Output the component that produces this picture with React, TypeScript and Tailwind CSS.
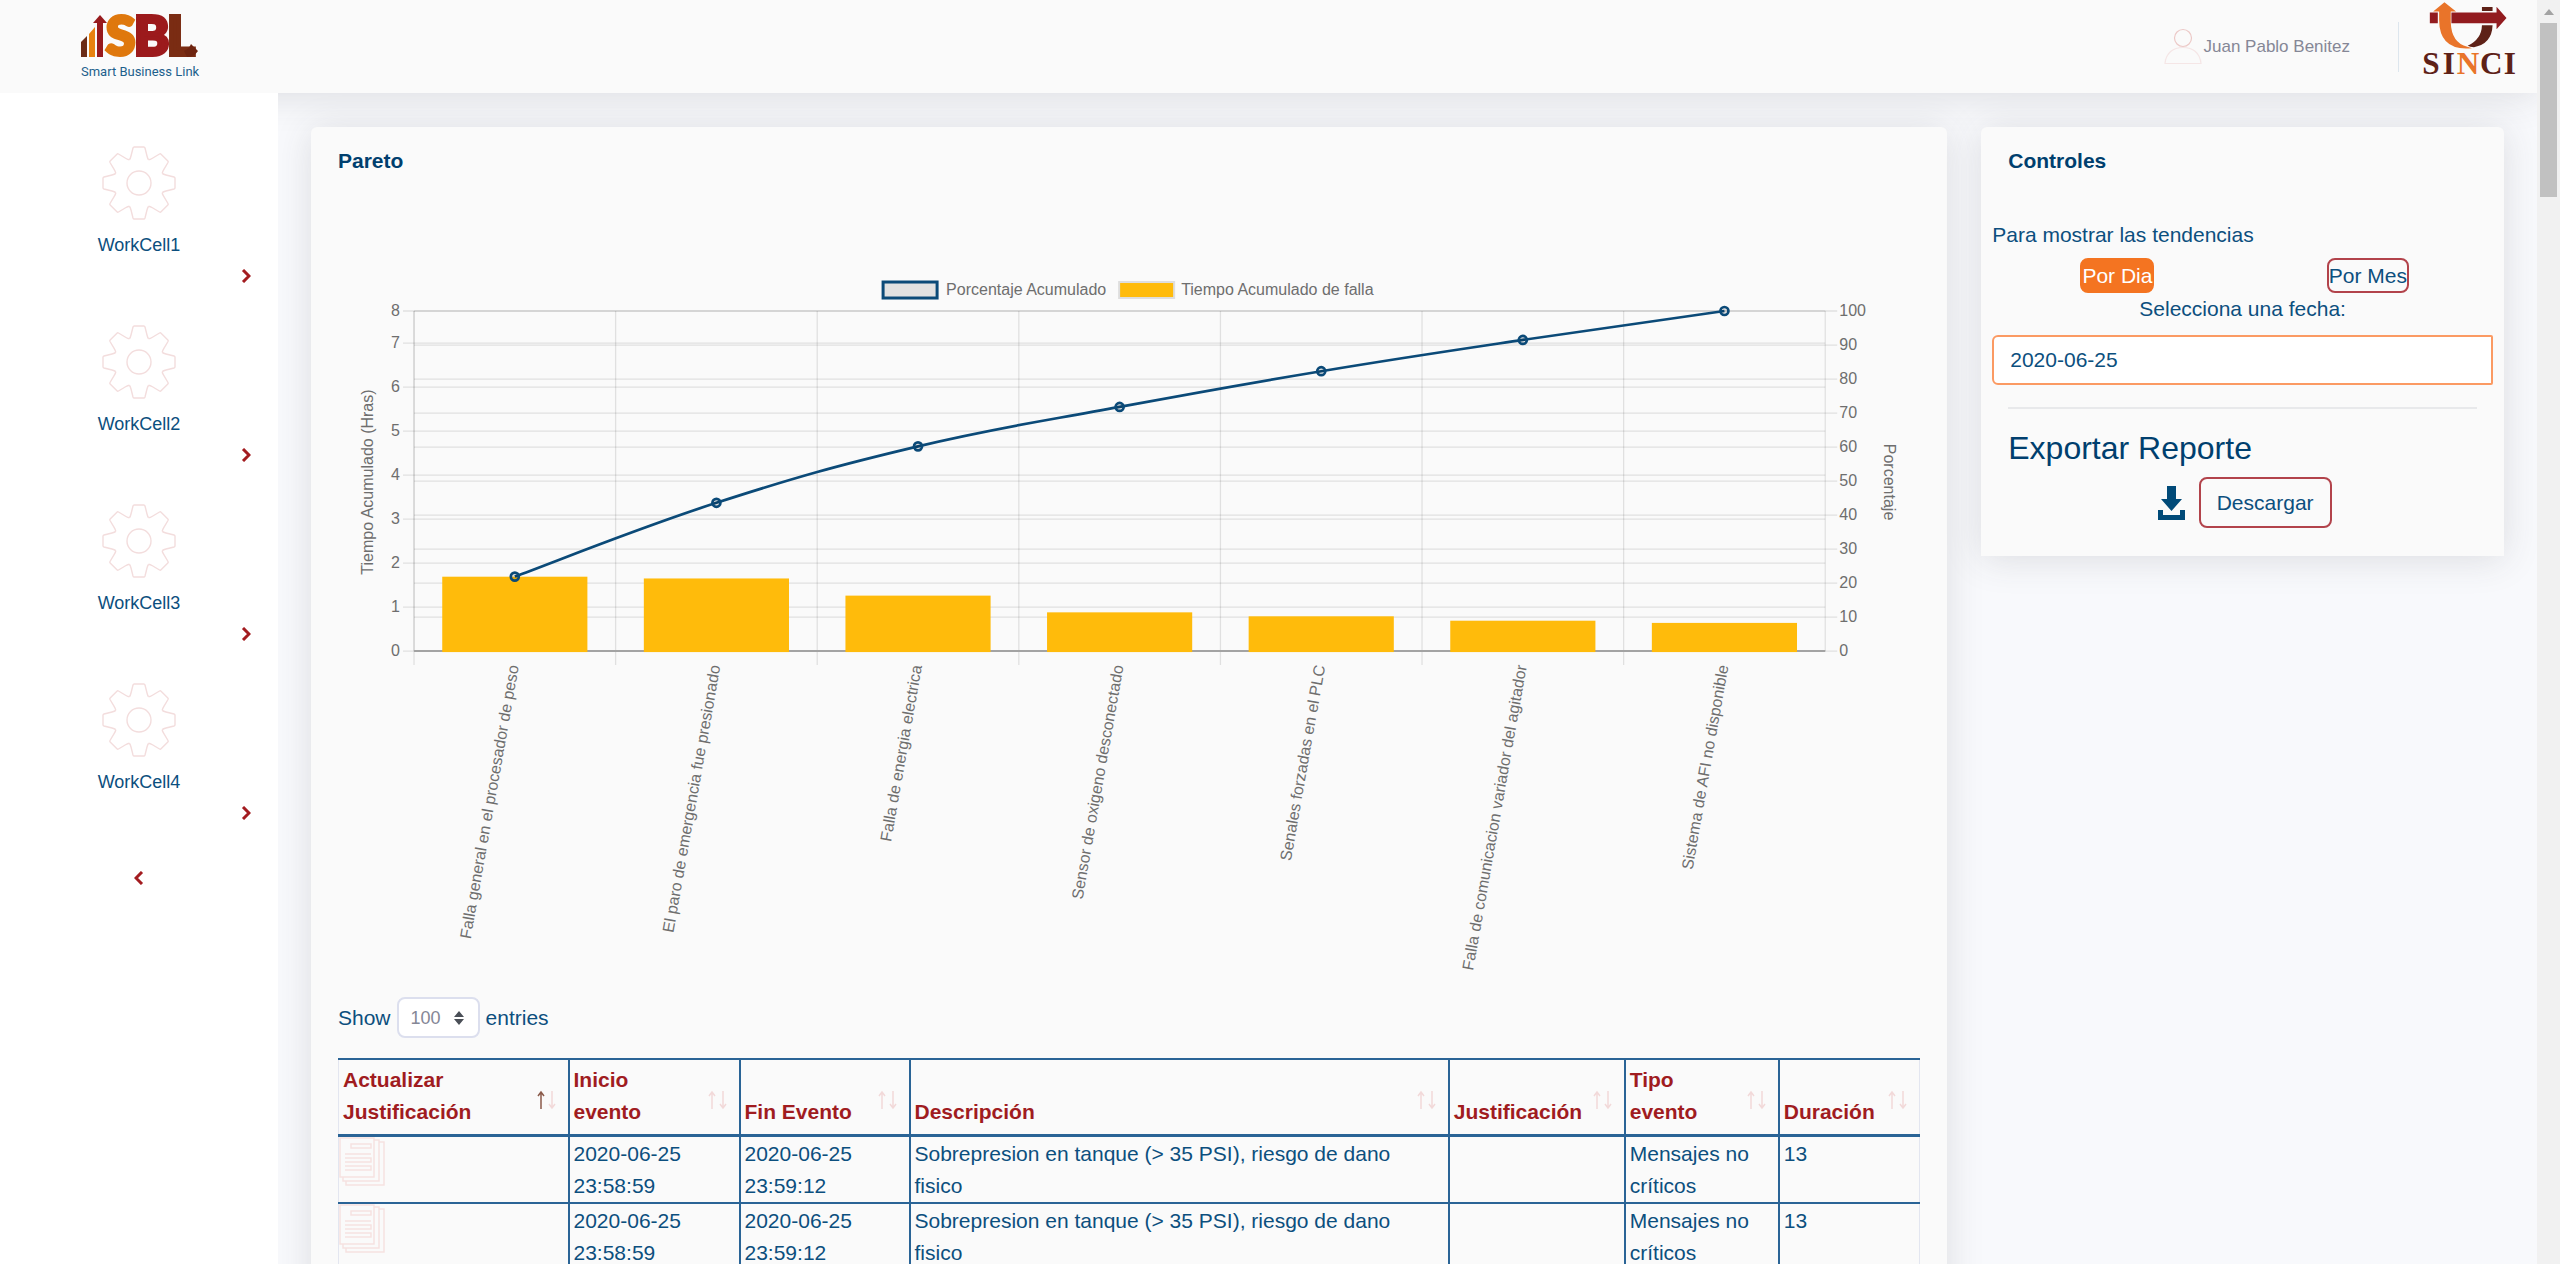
import React, { useState } from "react";

const workCells = ["WorkCell1", "WorkCell2", "WorkCell3", "WorkCell4"];

const paretoData = [
  { label: "Falla general en el procesador de peso", hours: 1.69, percent: 21.9 },
  { label: "El paro de emergencia fue presionado", hours: 1.65, percent: 43.6 },
  { label: "Falla de energia electrica", hours: 1.26, percent: 60.2 },
  { label: "Sensor de oxigeno desconectado", hours: 0.88, percent: 71.8 },
  { label: "Senales forzadas en el PLC", hours: 0.79, percent: 82.3 },
  { label: "Falla de comunicacion variador del agitador", hours: 0.69, percent: 91.5 },
  { label: "Sistema de AFI no disponible", hours: 0.64, percent: 100 },
];

const columns = [
  { name: "Actualizar Justificación", width: "w-[230px]", sorted: true },
  { name: "Inicio evento", width: "w-[171px]", sorted: false },
  { name: "Fin Evento", width: "w-[170px]", sorted: false },
  { name: "Descripción", width: "", sorted: false },
  { name: "Justificación", width: "w-[176px]", sorted: false },
  { name: "Tipo evento", width: "w-[154px]", sorted: false },
  { name: "Duración", width: "w-[141px]", sorted: false },
];

const event = {
  start: "2020-06-25 23:58:59",
  end: "2020-06-25 23:59:12",
  description: "Sobrepresion en tanque (> 35 PSI), riesgo de dano fisico",
  reason: "",
  type: "Mensajes no críticos",
  duration: 13,
};

const events = [1, 2].map((id) => ({ id, ...event }));

const SblLogo = () => (
  <svg viewBox="0 0 120 66" className="h-[66px] w-[120px] overflow-visible" role="img" aria-label="SBL Smart Business Link">
    <path d="M0 28l6-6v21H0z" fill="#6b2c17" />
    <path d="M8 20l6-7v30H8z" fill="#e8820f" />
    <path d="M16 43V9h-4l7-8 7 8h-4v34z" fill="#971a1d" />
    <g fontFamily="Lato, sans-serif" fontWeight="900" fontSize="53" strokeWidth="4">
      <text x="25" y="41" fill="#df780d" stroke="#df780d">S</text>
      <text x="53" y="41" fill="#9c1a1c" stroke="#9c1a1c">B</text>
      <text x="86" y="41" fill="#7a2c13" stroke="#7a2c13">L</text>
    </g>
    <path d="M103 37q5-2 7-7l7 7q-4 6-11 6z" fill="#6e2410" />
    <text x="0" y="62" fontFamily="Roboto, sans-serif" fontSize="13" fill="#1d5f8c">
      Smart Business Link
    </text>
  </svg>
);

const SinciLogo = () => (
  <svg viewBox="1025 0 285 232" className="h-[77px] w-[95px] overflow-visible" role="img" aria-label="SINCI">
    <path d="M1208 21h32v12h-32zM1208 76h32q-2 56-56 66-12 0-19-4 42-20 43-62z" fill="#5e2117" />
    <path d="M1051 38h24v32h-24zM1116 38h136V20l30 34-30 34V70h-136z" fill="#921b1f" />
    <path d="M1061 35l34-28 35 28h-16v32q2 62 50 74 8 2 14 4-98 10-99-84V35z" fill="#e9742a" />
    <g fontFamily="'Liberation Serif', serif" fontWeight="700" fontSize="94" textAnchor="middle">
      <text x="1054" y="222" fill="#5e2117">S</text>
      <text x="1108" y="222" fill="#5e2117">I</text>
      <text x="1166" y="222" fill="#e9742a">N</text>
      <text x="1236" y="222" fill="#5e2117">C</text>
      <text x="1292" y="222" fill="#5e2117">I</text>
    </g>
  </svg>
);

const gearTeeth = [0, 45, 90, 135, 180, 225, 270, 315];

const GearIcon = () => (
  <svg viewBox="-38 -38 76 76" className="h-19 w-19" fill="none" stroke="#f3dddd" strokeWidth="1.4">
    {gearTeeth.map((angle) => (
      <path
        key={angle}
        transform={`rotate(${angle})`}
        d="M-9.6 -23.2Q-8.6 -24.4 -8 -27L-6 -35Q-5.7 -36 -4.8 -36H4.8Q5.7 -36 6 -35L8 -27Q8.6 -24.4 9.6 -23.2"
      />
    ))}
    <circle r="12" />
  </svg>
);

const UserIcon = () => (
  <svg viewBox="0 0 38 38" className="h-[38px] w-[38px]" fill="none" strokeWidth="1.2">
    <circle cx="19" cy="10" r="8.5" stroke="#ecc9c7" />
    <path d="M1 35.5C2 25 9 19.5 19 19.5S36 25 37 35.5z" stroke="#f5e6e6" />
  </svg>
);

const Chevron = ({ left = false }: { left?: boolean }) => (
  <svg viewBox="0 0 10 14" className="h-[14px] w-[10px]" fill="none" stroke="#a31c20" strokeWidth="3">
    <path d={left ? "M8 1L2 7l6 6" : "M2 1l6 6-6 6"} />
  </svg>
);

const DownloadIcon = () => (
  <svg viewBox="0 0 27 34" className="h-[34px] w-[27px]" fill="#004a78">
    <path d="M9 0h9v13h6L13.5 25 3 13h6zM0 24h5v5h17v-5h5v10H0z" />
  </svg>
);

const DocumentsIcon = () => (
  <svg viewBox="0 0 46 50" className="block h-[50px] w-[46px]" fill="none" stroke="#f6e2e1" strokeWidth="1.5">
    <path d="M1 1h34v39H1zM35 3h5v41H4v-4M40 5h5v43H7v-4" />
    <path d="M12 7h20v4H12zM6 17h26M6 21h26v4H6M6 29h26v4H6" />
  </svg>
);

const SortIcon = ({ sorted }: { sorted: boolean }) => (
  <svg viewBox="0 0 19 20" className="h-5 w-[19px] shrink-0" fill="none" strokeWidth="1.5">
    <path d="M4 19V2M1 6l3-4 3 4" stroke={sorted ? "#8a5a4a" : "#f2d9d9"} />
    <path d="M15 1v17M12 14l3 4 3-4" stroke="#f2d9d9" />
  </svg>
);

const LEFT = 76;
const RIGHT = 1487;
const TOP = 134;
const BOTTOM = 474;
const STEP = (RIGHT - LEFT) / paretoData.length;
const HOUR = 44;

const points = paretoData.map((d, i) => ({
  x: LEFT + STEP * (i + 0.5),
  y: BOTTOM - ((BOTTOM - TOP) * d.percent) / 100,
}));

// smooth line through the points
const linePath = points.reduce((path, p, i) => {
  if (i === 0) return `M${p.x} ${p.y}`;
  const prev = points[i - 1];
  const before = points[i - 2] || prev;
  const next = points[i + 1] || p;
  const c1 = { x: prev.x + (p.x - before.x) * 0.2, y: prev.y + (p.y - before.y) * 0.2 };
  const c2 = { x: p.x - (next.x - prev.x) * 0.2, y: p.y - (next.y - prev.y) * 0.2 };
  return `${path}C${c1.x} ${c1.y} ${c2.x} ${c2.y} ${p.x} ${p.y}`;
}, "");

const ParetoChart = () => {
  const hours = [0, 1, 2, 3, 4, 5, 6, 7, 8];
  const percents = [0, 10, 20, 30, 40, 50, 60, 70, 80, 90, 100];
  const hourY = (h: number) => (h === 8 ? TOP : BOTTOM - h * HOUR);
  const percentY = (p: number) => BOTTOM - ((BOTTOM - TOP) * p) / 100;

  return (
    <svg
      viewBox="0 0 1582 800"
      className="block h-auto w-full"
      fontFamily="'Liberation Sans', sans-serif"
      fontSize="16"
      fill="#6e6e6e"
      role="img"
      aria-label="Pareto"
    >
      {/* Legend */}
      <rect x="545" y="105" width="54" height="16" fill="#e1e1e1" stroke="#0b4a78" strokeWidth="3" />
      <text x="608" y="118">Porcentaje Acumulado</text>
      <rect x="781" y="105" width="55" height="16" fill="#ffbb0b" stroke="#dedede" strokeWidth="2" />
      <text x="843" y="118">Tiempo Acumulado de falla</text>

      {/* Grid */}
      <g stroke="#000000" strokeOpacity="0.1" strokeWidth="1.3">
        {hours.map((h) => (
          <line key={h} x1={LEFT - 11} x2={RIGHT} y1={hourY(h)} y2={hourY(h)} />
        ))}
        {percents.map((p) => (
          <line key={p} x1={LEFT} x2={RIGHT + 12} y1={percentY(p)} y2={percentY(p)} />
        ))}
        {[0, 1, 2, 3, 4, 5, 6, 7].map((i) => (
          <line key={i} x1={LEFT + STEP * i} x2={LEFT + STEP * i} y1={TOP} y2={i === 7 ? BOTTOM : BOTTOM + 14} />
        ))}
        <line x1={LEFT} x2={LEFT} y1={TOP} y2={BOTTOM} />
      </g>
      <line x1={LEFT} x2={RIGHT} y1={BOTTOM} y2={BOTTOM} stroke="#a3a3a3" strokeWidth="2" />

      {/* Axis values */}
      {hours.map((h) => (
        <text key={h} x="62" y={hourY(h) + 5} textAnchor="end">{h}</text>
      ))}
      {percents.map((p) => (
        <text key={p} x="1501" y={percentY(p) + 5}>{p}</text>
      ))}
      <text transform="translate(35 305) rotate(-90)" textAnchor="middle">Tiempo Acumulado (Hras)</text>
      <text transform="translate(1546 305) rotate(90)" textAnchor="middle">Porcentaje</text>

      {/* Bars and category labels */}
      {paretoData.map((d, i) => (
        <g key={d.label}>
          <rect
            x={points[i].x - STEP * 0.36}
            y={BOTTOM - d.hours * HOUR}
            width={STEP * 0.72}
            height={d.hours * HOUR + 1}
            fill="#ffbb0b"
          />
          <text transform={`translate(${points[i].x + 4} ${BOTTOM + 15}) rotate(-80)`} textAnchor="end">
            {d.label}
          </text>
        </g>
      ))}

      {/* Accumulated line */}
      <g fill="none" stroke="#0b4a78" strokeWidth="2.7">
        <path d={linePath} />
        {points.map((p) => (
          <circle key={p.x} cx={p.x} cy={p.y} r="4" fill="#000000" fillOpacity="0.1" />
        ))}
      </g>
    </svg>
  );
};

const EventsTable = () => (
  <table className="w-full table-fixed border-collapse border-x border-[#e3e6f0] text-left text-[21px] leading-8">
    <thead>
      <tr className="border-t-2 border-b-3 border-[#2a6496] text-[#a01c1f]">
        {columns.map((col) => (
          <th
            key={col.name}
            scope="col"
            className={`${col.width} border-l-2 border-[#2a6496] pt-1 pr-3 pb-1.5 pl-1 align-bottom font-bold first:border-l-0`}
          >
            <div className="flex items-end justify-between gap-2">
              <span>{col.name}</span>
              <span className="self-end pb-[18px]">
                <SortIcon sorted={col.sorted} />
              </span>
            </div>
          </th>
        ))}
      </tr>
    </thead>
    <tbody className="align-top">
      {events.map((row) => (
        <tr key={row.id} className="border-b-2 border-[#2a6496]">
          <td className="p-0">
            <button type="button" aria-label="Actualizar Justificación" className="block cursor-pointer">
              <DocumentsIcon />
            </button>
          </td>
          <td className="border-l-2 border-[#2a6496] pt-px pl-1">{row.start}</td>
          <td className="border-l-2 border-[#2a6496] pt-px pl-1">{row.end}</td>
          <td className="border-l-2 border-[#2a6496] pt-px pr-8 pl-1">{row.description}</td>
          <td className="border-l-2 border-[#2a6496] pt-px pl-1">{row.reason}</td>
          <td className="border-l-2 border-[#2a6496] pt-px pl-1">{row.type}</td>
          <td className="border-l-2 border-[#2a6496] pt-px pl-1">{row.duration}</td>
        </tr>
      ))}
    </tbody>
  </table>
);

const Controls = () => {
  const [mode, setMode] = useState("dia");
  const [date, setDate] = useState("2020-06-25");
  const active = "border-[#f47421] bg-[#f47421] text-white";
  const idle = "border-[#b2434b] text-[#0c4f7e]";

  return (
    <section className="rounded-t-md bg-[#fafafa] px-[11px] pt-[18px] pb-7 shadow-[0_3px_37px_rgba(58,59,69,0.15)]">
      <h2 className="px-4 font-bold text-[#003f6e]">Controles</h2>
      <p className="mt-[42px]">Para mostrar las tendencias</p>
      <div className="mt-[7px] grid grid-cols-2 justify-items-center">
        <button
          type="button"
          onClick={() => setMode("dia")}
          className={`h-[35px] rounded-lg border-2 leading-[30px] ${mode === "dia" ? active : idle}`}
        >
          Por Dia
        </button>
        <button
          type="button"
          onClick={() => setMode("mes")}
          className={`h-[35px] rounded-lg border-2 leading-[30px] ${mode === "mes" ? active : idle}`}
        >
          Por Mes
        </button>
      </div>
      <label htmlFor="fecha" className="block text-center">
        Selecciona una fecha:
      </label>
      <input
        id="fecha"
        type="text"
        value={date}
        onChange={(e) => setDate(e.target.value)}
        className="mt-2.5 block h-[50px] w-full rounded-l-md rounded-r-xs border-2 border-[#fb9a63] bg-white px-4"
      />
      <hr className="mx-4 mt-[22px] border-t-2 border-[#e8e9eb]" />
      <h3 className="mt-5 px-4 text-[32px] leading-[38px] text-[#003f6e]">Exportar Reporte</h3>
      <div className="mt-2.5 flex items-center justify-center gap-3.5 pl-1">
        <DownloadIcon />
        <button type="button" className="h-[51px] rounded-lg border-2 border-[#b2434b] px-4">
          Descargar
        </button>
      </div>
    </section>
  );
};

const App = () => {
  const [entries, setEntries] = useState("100");

  return (
    <div className="flex h-screen overflow-hidden bg-[#f8f9fc] font-['Liberation_Sans',Arial,sans-serif] text-[21px] leading-8 text-[#0c4f7e]">
      <div className="flex min-w-0 flex-1 flex-col">
        <header className="flex h-[93px] shrink-0 items-center justify-between bg-[#fafafa] pr-[21px] pl-[81px] shadow-[0_3px_37px_rgba(58,59,69,0.15)]">
          <a href="#">
            <SblLogo />
          </a>
          <div className="flex items-center">
            <button type="button" className="flex items-center gap-0.5 text-[17px] text-[#858796]">
              <UserIcon />
              Juan Pablo Benitez
            </button>
            <div className="ml-12 h-[50px] w-px bg-[#dde6ee]" />
            <a href="#" className="mb-4 ml-[22px]">
              <SinciLogo />
            </a>
          </div>
        </header>

        <div className="flex min-h-0 flex-1">
          {/* Sidebar */}
          <nav className="relative flex w-[278px] shrink-0 flex-col items-center bg-white pt-[52px]">
            {workCells.map((cell) => (
              <a key={cell} href="#" className="flex h-[179px] w-full flex-col items-center text-[18px] leading-6">
                <GearIcon />
                <span className="mt-3">{cell}</span>
                <span className="mt-3 self-end pr-[27px]">
                  <Chevron />
                </span>
              </a>
            ))}
            <button type="button" aria-label="Contraer menú" className="mt-2.5 cursor-pointer">
              <Chevron left />
            </button>
          </nav>

          <main className="grid min-w-0 flex-1 grid-cols-[3fr_1fr] items-start px-4 pt-[17px]">
            <div className="min-w-0 p-[17px]">
              <section className="rounded-md bg-[#fafafa] px-[27px] pt-[18px] pb-10 shadow-[0_3px_37px_rgba(58,59,69,0.15)]">
                <h2 className="font-bold text-[#003f6e]">Pareto</h2>
                <ParetoChart />
                <label className="my-5 flex items-center gap-1.5">
                  Show
                  <span className="relative">
                    <select
                      value={entries}
                      onChange={(e) => setEntries(e.target.value)}
                      className="block h-[41px] w-[83px] appearance-none rounded-lg border-2 border-[#dcdfee] bg-white pl-3 text-[18px] text-[#858796]"
                    >
                      <option>10</option>
                      <option>25</option>
                      <option>50</option>
                      <option>100</option>
                    </select>
                    <svg
                      viewBox="0 0 10 14"
                      className="pointer-events-none absolute top-3.5 right-4 h-3.5 w-2.5"
                      fill="#4a4f57"
                    >
                      <path d="M0 6l5-6 5 6zM0 8h10l-5 6z" />
                    </svg>
                  </span>
                  entries
                </label>
                <EventsTable />
              </section>
            </div>
            <div className="min-w-0 p-[17px]">
              <Controls />
            </div>
          </main>
        </div>
      </div>

      {/* Scrollbar */}
      <div className="flex w-[23px] shrink-0 flex-col items-center bg-[#f1f1f1]">
        <svg viewBox="0 0 10 6" className="mt-[9px] h-1.5 w-2.5" fill="#a3a3a3">
          <path d="M0 6l5-6 5 6z" />
        </svg>
        <div className="mt-2 h-[174px] w-[17px] bg-[#c1c1c1]" />
      </div>
    </div>
  );
};

export default App;
